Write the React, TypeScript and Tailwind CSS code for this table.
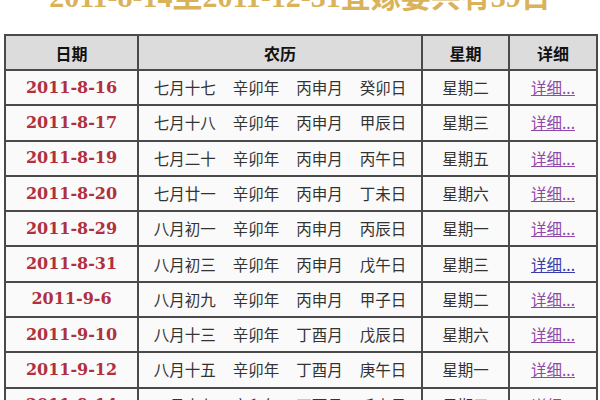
const rows = [
  { date: '2011-8-16', lunar: ['七月十七', '辛卯年', '丙申月', '癸卯日'], week: '星期二' },
  { date: '2011-8-17', lunar: ['七月十八', '辛卯年', '丙申月', '甲辰日'], week: '星期三' },
  { date: '2011-8-19', lunar: ['七月二十', '辛卯年', '丙申月', '丙午日'], week: '星期五' },
  { date: '2011-8-20', lunar: ['七月廿一', '辛卯年', '丙申月', '丁未日'], week: '星期六' },
  { date: '2011-8-29', lunar: ['八月初一', '辛卯年', '丙申月', '丙辰日'], week: '星期一' },
  { date: '2011-8-31', lunar: ['八月初三', '辛卯年', '丙申月', '戊午日'], week: '星期三', fresh: true },
  { date: '2011-9-6', lunar: ['八月初九', '辛卯年', '丙申月', '甲子日'], week: '星期二' },
  { date: '2011-9-10', lunar: ['八月十三', '辛卯年', '丁酉月', '戊辰日'], week: '星期六' },
  { date: '2011-9-12', lunar: ['八月十五', '辛卯年', '丁酉月', '庚午日'], week: '星期一' },
  { date: '2011-9-14', lunar: ['八月十七', '辛卯年', '丁酉月', '壬申日'], week: '星期三' },
]

const cjk = "font-['Noto_Sans_CJK_SC',sans-serif]"

export default function App() {
  return (
    <div className="w-[600px] h-[400px] overflow-hidden bg-white">
      <div className="h-[34px] overflow-hidden">
        <div className="-mt-[18px] text-center text-[30px] leading-[30px] font-bold text-[#dab25a] font-['Liberation_Serif','Noto_Sans_CJK_SC',serif]">
          2011-8-14至2011-12-31宜嫁娶共有39日
        </div>
      </div>
      <table className="ml-[4px] w-[592px] table-fixed border-collapse border-[2px] border-[#4a4a4a]">
        <colgroup>
          <col className="w-[133px]" />
          <col className="w-[284px]" />
          <col className="w-[87px]" />
          <col className="w-[88px]" />
        </colgroup>
        <thead>
          <tr className={`h-[35px] bg-[#dcdcdc] text-[16px] font-bold text-[#111] ${cjk}`}>
            <th className="border-[2px] border-[#4a4a4a] p-0">日期</th>
            <th className="border-[2px] border-[#4a4a4a] p-0">农历</th>
            <th className="border-[2px] border-[#4a4a4a] p-0">星期</th>
            <th className="border-[2px] border-[#4a4a4a] p-0">详细</th>
          </tr>
        </thead>
        <tbody>
          {rows.map(r => (
            <tr key={r.date} className="h-[35.3px] bg-[#fafafa]">
              <td className="border-[2px] border-[#4a4a4a] p-0 text-center text-[16px] font-bold text-[#b0303e] font-['DejaVu_Serif',serif]">
                {r.date}
              </td>
              <td className="border-[2px] border-[#4a4a4a] p-0">
                <div className={`flex justify-center gap-[17px] text-[15.5px] text-[#333] ${cjk}`}>
                  {r.lunar.map((t, i) => <span key={i}>{t}</span>)}
                </div>
              </td>
              <td className={`border-[2px] border-[#4a4a4a] p-0 text-center text-[15.5px] text-[#333] ${cjk}`}>
                {r.week}
              </td>
              <td className={`border-[2px] border-[#4a4a4a] p-0 text-center text-[15.5px] ${cjk}`}>
                <a href="#" className={r.fresh ? 'underline text-[#3a3aa8]' : 'underline text-[#9048a8]'}>详细...</a>
              </td>
            </tr>
          ))}
        </tbody>
      </table>
    </div>
  )
}
